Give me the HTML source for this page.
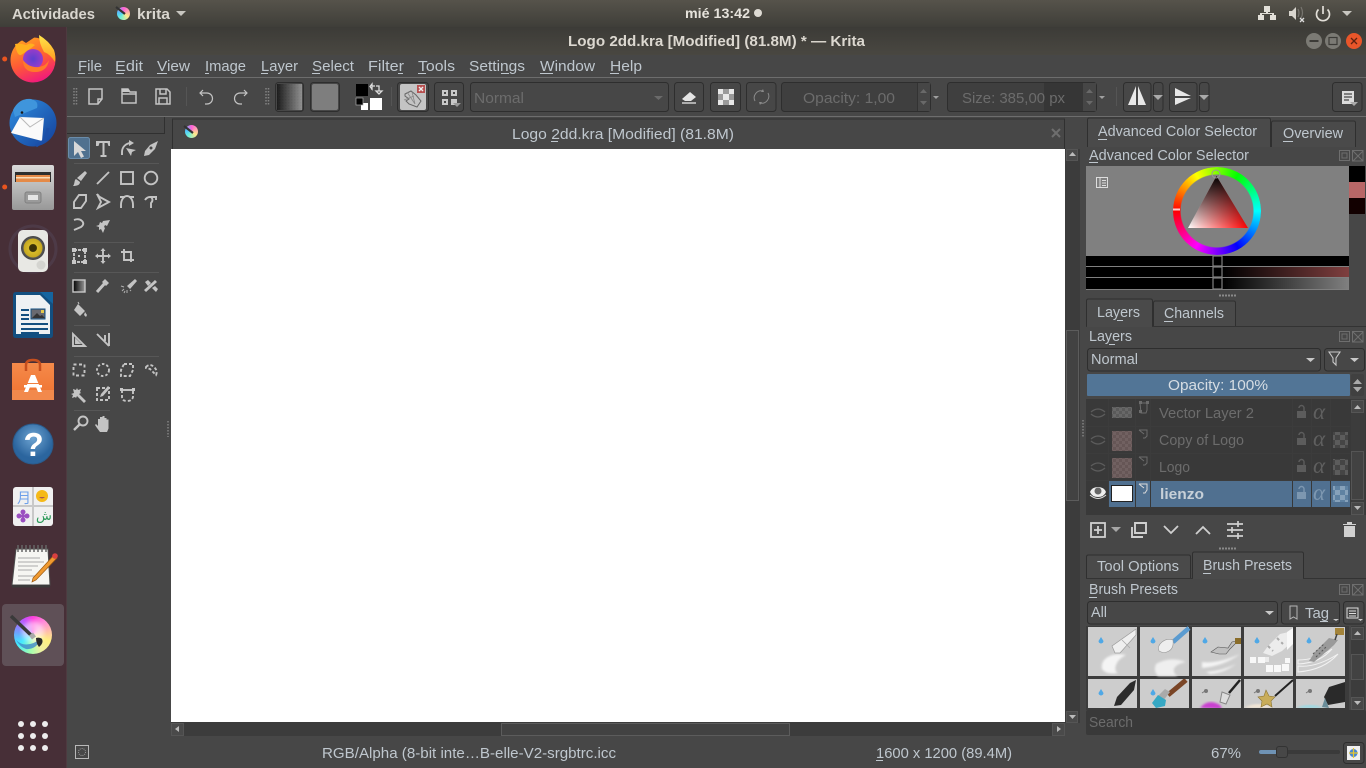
<!DOCTYPE html>
<html><head><meta charset="utf-8"><title>Krita</title>
<style>
html,body{margin:0;padding:0;width:1366px;height:768px;overflow:hidden;background:#474747}
svg{position:absolute;left:0;top:0;display:block}
text{font-family:"Liberation Sans",sans-serif;font-size:14.6px;fill:#bfc7ce}
.b{font-weight:bold}
.dim{fill:#6c6c6c}
.ic{fill:none;stroke:#c4c4c4;stroke-width:1.9}
.ic2{fill:#c4c4c4;stroke:none}
.sep{fill:#555}
.btn{fill:#474747;stroke:#2e2e2e;stroke-width:1}
.tab{fill:#4a4a4a;stroke:#2f2f2f}
.u{fill:#bfc7ce}
.hd{fill:none;stroke:#828282;stroke-width:1.5;stroke-dasharray:1.5 1.5}
</style></head><body>
<svg width="1366" height="768" viewBox="0 0 1366 768" xmlns="http://www.w3.org/2000/svg">
<defs>
<linearGradient id="top" x1="0" y1="0" x2="0" y2="1"><stop offset="0" stop-color="#56534b"/><stop offset="1" stop-color="#3f3e39"/></linearGradient>
<linearGradient id="tb" x1="0" y1="0" x2="0" y2="1"><stop offset="0" stop-color="#3c3b37"/><stop offset="1" stop-color="#494741"/></linearGradient>
<linearGradient id="g1" x1="0" y1="0" x2="1" y2="0"><stop offset="0" stop-color="#000"/><stop offset="1" stop-color="#999"/></linearGradient>
<linearGradient id="bar2" x1="0" y1="0" x2="1" y2="0"><stop offset="0" stop-color="#000"/><stop offset="1" stop-color="#7f3f3f"/></linearGradient>
<linearGradient id="bar3" x1="0" y1="0" x2="1" y2="0"><stop offset="0" stop-color="#000"/><stop offset="1" stop-color="#808080"/></linearGradient>
<linearGradient id="tw" gradientUnits="userSpaceOnUse" x1="1188" y1="228" x2="1248" y2="228"><stop offset="0" stop-color="#fff"/><stop offset="1" stop-color="#f00"/></linearGradient>
<linearGradient id="tk" gradientUnits="userSpaceOnUse" x1="1217" y1="176" x2="1217" y2="228"><stop offset="0" stop-color="#000"/><stop offset="1" stop-color="#000" stop-opacity="0"/></linearGradient>
<linearGradient id="ff" x1="0.2" y1="0" x2="0.6" y2="1"><stop offset="0" stop-color="#ffa41f"/><stop offset="0.55" stop-color="#ff5a36"/><stop offset="1" stop-color="#f0197d"/></linearGradient>
<linearGradient id="ffy" x1="0.5" y1="0" x2="0.5" y2="1"><stop offset="0" stop-color="#ffe64a"/><stop offset="1" stop-color="#ff9a1f"/></linearGradient>
<radialGradient id="ffp"><stop offset="0" stop-color="#5b3fd0"/><stop offset="1" stop-color="#9a3cc8"/></radialGradient>
<linearGradient id="tbg" x1="0" y1="0" x2="1" y2="1"><stop offset="0" stop-color="#2f8fe0"/><stop offset="1" stop-color="#143f9a"/></linearGradient>
<linearGradient id="cab" x1="0" y1="0" x2="0" y2="1"><stop offset="0" stop-color="#dadada"/><stop offset="1" stop-color="#989898"/></linearGradient>
<linearGradient id="org" x1="0" y1="0" x2="0" y2="1"><stop offset="0" stop-color="#f58a4a"/><stop offset="1" stop-color="#ef7130"/></linearGradient>
<radialGradient id="hlp" cx="0.5" cy="0.35"><stop offset="0" stop-color="#6ea4d2"/><stop offset="1" stop-color="#2b659e"/></radialGradient>
<radialGradient id="spk"><stop offset="0" stop-color="#3a3208"/><stop offset="0.3" stop-color="#3a3208"/><stop offset="0.36" stop-color="#d7bb2a"/><stop offset="0.76" stop-color="#c6a820"/><stop offset="0.82" stop-color="#555"/><stop offset="1" stop-color="#444"/></radialGradient>
<g id="fl"><rect x="0.500" y="0.500" width="10" height="10" fill="none" stroke="#6e6e6e" stroke-width="1"/><rect x="3" y="3" width="5" height="5" fill="none" stroke="#6e6e6e" stroke-width="1"/><path d="M13.500 0.500h10.500v10.500h-10.500zM14 1l10 10M24 1l-10 10" fill="none" stroke="#6e6e6e" stroke-width="1"/></g>
<g id="eyeoff"><path d="M-7 -1q7-6 14 0M-7 1q7 6 14 0" fill="none" stroke="#5c5c5c" stroke-width="1.300"/></g>
<g id="lock"><path d="M-5 -1h9v7h-9z" fill="#5c5c5c"/><path d="M2 -1v-3a2.500 2.500 0 0 0-5 0" fill="none" stroke="#5c5c5c" stroke-width="1.400"/></g>
<pattern id="chk" width="10" height="10" patternUnits="userSpaceOnUse"><rect width="10" height="10" fill="#5c5c5c"/><rect width="5" height="5" fill="#454545"/><rect x="5" y="5" width="5" height="5" fill="#454545"/></pattern>
<pattern id="chk2" width="10" height="10" patternUnits="userSpaceOnUse"><rect width="10" height="10" fill="#86a1ba"/><rect width="5" height="5" fill="#5f82a2"/><rect x="5" y="5" width="5" height="5" fill="#5f82a2"/></pattern>
<pattern id="chk3" width="6" height="6" patternUnits="userSpaceOnUse"><rect width="6" height="6" fill="#686868"/><rect width="3" height="3" fill="#5a5a5a"/><rect x="3" y="3" width="3" height="3" fill="#5a5a5a"/></pattern>
<pattern id="dit" width="3" height="3" patternUnits="userSpaceOnUse"><rect width="3" height="3" fill="#777"/><rect width="1.5" height="1.5" fill="#666"/></pattern>
<clipPath id="pr2"><rect x="1086" y="679" width="262" height="29"/></clipPath>
<filter id="bl"><feGaussianBlur stdDeviation="2.5"/></filter>
<filter id="bl1"><feGaussianBlur stdDeviation="1"/></filter>
</defs>

<!-- window base -->
<rect width="1366" height="768" fill="#474747"/>
<!-- top bar -->
<rect x="0" y="0" width="1366" height="27" fill="url(#top)"/>
<text x="12" y="19" class="b" textLength="83" lengthAdjust="spacingAndGlyphs" style="fill:#d9d6cf">Actividades</text>
<foreignObject x="117" y="7" width="13" height="13"><div xmlns="http://www.w3.org/1999/xhtml" style="width:13px;height:13px;border-radius:50%;background:conic-gradient(#ff5fd8,#ffe98a 35%,#70f0d8 60%,#4fc4ff 78%,#ff5fd8)"></div></foreignObject>
<path d="M116 7l9 7" stroke="#333" stroke-width="2.2"/>
<text x="137" y="19" class="b" textLength="33" lengthAdjust="spacingAndGlyphs" style="fill:#d9d6cf">krita</text>
<path d="M176 11h10l-5 5z" fill="#c8c6c0"/>
<text x="685" y="18" class="b" textLength="65" lengthAdjust="spacingAndGlyphs" style="fill:#e6e3dc;font-size:14px">mié 13:42</text>
<circle cx="758" cy="13" r="4" fill="#dedbd4"/>
<path d="M1264 6h6v6h-2v1h6v2h2v5h-6v-5h2v-1h-10v1h2v5h-6v-5h2v-2h6v-1h-2z" fill="#e2dfd8"/>
<path d="M1289 11h3l4-4v13l-4-4h-3z" fill="#d8d5ce"/><path d="M1298 9q2 4 0 8M1301 7q3 6 0 11" fill="none" stroke="#77756f" stroke-width="1.2"/><path d="M1300 18l4 4M1304 18l-4 4" stroke="#ddd" stroke-width="1.3"/>
<path d="M1318.500 9.500a6.500 6.500 0 1 0 9 0" fill="none" stroke="#e2dfd8" stroke-width="1.700"/><path d="M1323 6v8" stroke="#e2dfd8" stroke-width="1.7"/>
<path d="M1342 11h10l-5 5z" fill="#c8c6c0"/>

<!-- title bar -->
<rect x="67" y="27" width="1299" height="28" fill="url(#tb)"/>
<text x="568" y="46" class="b" textLength="297" lengthAdjust="spacingAndGlyphs" style="fill:#dcd8d0">Logo 2dd.kra [Modified]  (81.8M) * — Krita</text>
<circle cx="1314" cy="41" r="8" fill="#7b7a74"/><rect x="1309.5" y="40" width="9" height="2" fill="#3c3b37"/>
<circle cx="1333" cy="41" r="8" fill="#7b7a74"/><rect x="1329" y="37.5" width="8" height="7" fill="none" stroke="#3c3b37" stroke-width="1.2"/>
<circle cx="1354" cy="41" r="8" fill="#e9562a"/><path d="M1351 38l6 6M1357 38l-6 6" stroke="#5e2210" stroke-width="1.3"/>

<!-- menu bar -->
<rect x="67" y="55" width="1299" height="22" fill="#474747"/>
<g>
<text x="78" y="71" textLength="24" lengthAdjust="spacingAndGlyphs">File</text><rect class="u" x="78" y="73" width="7" height="1"/>
<text x="115" y="71" textLength="28" lengthAdjust="spacingAndGlyphs">Edit</text><rect class="u" x="116" y="73" width="8" height="1"/>
<text x="157" y="71" textLength="33" lengthAdjust="spacingAndGlyphs">View</text><rect class="u" x="157" y="73" width="10" height="1"/>
<text x="205" y="71" textLength="41" lengthAdjust="spacingAndGlyphs">Image</text><rect class="u" x="205" y="73" width="4" height="1"/>
<text x="261" y="71" textLength="37" lengthAdjust="spacingAndGlyphs">Layer</text><rect class="u" x="261" y="73" width="7" height="1"/>
<text x="312" y="71" textLength="42" lengthAdjust="spacingAndGlyphs">Select</text><rect class="u" x="312" y="73" width="8" height="1"/>
<text x="368" y="71" textLength="36" lengthAdjust="spacingAndGlyphs">Filter</text><rect class="u" x="398" y="73" width="5" height="1"/>
<text x="418" y="71" textLength="37" lengthAdjust="spacingAndGlyphs">Tools</text><rect class="u" x="418" y="73" width="8" height="1"/>
<text x="469" y="71" textLength="56" lengthAdjust="spacingAndGlyphs">Settings</text><rect class="u" x="501" y="73" width="8" height="1"/>
<text x="540" y="71" textLength="55" lengthAdjust="spacingAndGlyphs">Window</text><rect class="u" x="540" y="73" width="13" height="1"/>
<text x="610" y="71" textLength="32" lengthAdjust="spacingAndGlyphs">Help</text><rect class="u" x="610" y="73" width="9" height="1"/>
</g>
<rect x="67" y="77" width="1299" height="1" fill="#6d6d6d"/>

<!-- toolbar -->
<path class="hd" d="M74 88v17M76.500 88v17"/>
<path class="ic" style="stroke-width:1.500" d="M89 89h13v10l-4 5h-9zM102 99h-4v5"/>
<path class="ic" style="stroke-width:1.500" d="M122 94h14v9h-14zM122 94v-5h6l2 3h6v2"/><path d="M122 89h6l2 3h-8z" fill="#c8c8c8"/>
<path class="ic" style="stroke-width:1.500" d="M156 89h11l3 3v12h-14zM160 89v5h6v-5M159 104v-6h8v6"/>
<rect x="186" y="87" width="1" height="19" class="sep"/>
<path class="ic" style="stroke-width:1.2" d="M203 91l-3 3 3 3M200 94h7a5.5 5.5 0 0 1 0 11h-2" transform="translate(0,-1)"/>
<path class="ic" style="stroke-width:1.2" d="M245 91l3 3-3 3M248 94h-7a5.5 5.5 0 0 0 0 11h2" transform="translate(-1,-1)"/>
<path class="hd" d="M266 88v17M268.500 88v17"/>
<rect x="275.500" y="82.500" width="28" height="29" rx="3" class="btn" fill="#3a3a3a"/>
<rect x="277" y="84" width="25" height="26" fill="url(#g1)"/><rect x="277" y="84" width="25" height="26" fill="url(#dit)" opacity=".25"/>
<rect x="310.500" y="82.500" width="29" height="29" rx="3" class="btn"/>
<rect x="312" y="84" width="26" height="26" rx="2" fill="#7e7e7e"/>
<rect x="356" y="84" width="12" height="12" fill="#000"/>
<path d="M372 90v-4h3M372 84l-2 2.500 2 2.500z M376 86h3v5M379 94l-3-3h6z" fill="none" stroke="#ddd" stroke-width="1.3"/>
<rect x="361" y="103" width="7" height="7" fill="#fff"/><rect x="356" y="98" width="7" height="7" fill="#000" stroke="#aaa" stroke-width=".7"/>
<rect x="370" y="98" width="12" height="12" fill="#fff"/>
<rect x="391" y="87" width="1" height="19" class="sep"/>
<rect x="397.500" y="82.500" width="31" height="29" rx="3" class="btn"/>
<rect x="400" y="84" width="26" height="26" rx="2" fill="#c4c4c4"/>
<path d="M405 94l6-3 5 4 5 6-4 6-8-3-3-3 3-2-4-3z" fill="none" stroke="#666" stroke-width="1"/><path d="M407 92l8 12M412 92l3 12M404 100l10-4" stroke="#888" stroke-width=".8"/>
<rect x="417" y="85" width="8" height="8" fill="#b85050"/><path d="M419 87l4 4M423 87l-4 4" stroke="#eee" stroke-width="1.4"/>
<rect x="434.500" y="82.500" width="29" height="29" rx="3" class="btn"/>
<g fill="#c8c8c8"><rect x="442" y="90" width="6" height="6"/><rect x="451" y="90" width="6" height="6"/><rect x="442" y="99" width="6" height="6"/><rect x="451" y="99" width="6" height="6"/></g>
<g fill="#474747"><rect x="444" y="92" width="2" height="2"/><rect x="453" y="92" width="2" height="2"/><rect x="444" y="101" width="2" height="2"/></g>
<path d="M453 103h8l-4 4z" fill="#999"/>
<rect x="470.500" y="82.500" width="198" height="29" rx="3" class="btn" fill="#434343"/>
<text x="474" y="103" class="dim" textLength="50" lengthAdjust="spacingAndGlyphs">Normal</text>
<path d="M654 96h9l-4.500 4z" fill="#6a6a6a"/>
<rect x="674.500" y="82.500" width="29" height="29" rx="3" class="btn"/>
<path d="M682 99l8-7 6 5-5 4h-6z" fill="#e4e4e4"/><path d="M682 103h14" stroke="#d0d0d0" stroke-width="1.5"/>
<rect x="710.500" y="82.500" width="30" height="29" rx="3" class="btn"/>
<g><g fill="#e8e8e8"><rect x="718" y="89" width="5" height="5"/><rect x="729" y="89" width="5" height="5"/><rect x="723" y="94" width="6" height="6"/><rect x="718" y="100" width="5" height="5"/><rect x="729" y="100" width="5" height="5"/></g><g fill="#9a9a9a"><rect x="723" y="89" width="6" height="5"/><rect x="718" y="94" width="5" height="6"/><rect x="729" y="94" width="5" height="6"/><rect x="723" y="100" width="6" height="5"/></g></g>
<rect x="746.500" y="82.500" width="29.500" height="29" rx="3" class="btn"/>
<path d="M755 101a7 7 0 0 1 8-10M768 93a7 7 0 0 1-8 10" fill="none" stroke="#8a8a8a" stroke-width="1"/><path d="M763 89l1 3-3 0zM760 105l-1-3 3 0z" fill="#8a8a8a"/>
<rect x="781.500" y="82.500" width="149" height="29" rx="3" fill="#3f3f3f" stroke="#2e2e2e"/>
<rect x="917" y="83" width="13" height="28" fill="#464646"/><rect x="917" y="83" width="1" height="28" fill="#333"/>
<path d="M920 93l3.500-4 3.500 4zM920 101h7l-3.500 4z" fill="#696969"/>
<text x="803" y="103" class="dim" textLength="92" lengthAdjust="spacingAndGlyphs">Opacity:  1,00</text>
<path d="M933 96h6l-3 3z" fill="#a0a0a0"/>
<rect x="947.500" y="82.500" width="149" height="29" rx="3" fill="#3f3f3f" stroke="#2e2e2e"/>
<rect x="1044" y="83" width="39" height="28" fill="#363636"/>
<rect x="1083" y="83" width="13" height="28" fill="#464646"/>
<path d="M1086 93l3.500-4 3.500 4zM1086 101h7l-3.500 4z" fill="#696969"/>
<text x="962" y="103" class="dim" textLength="103" lengthAdjust="spacingAndGlyphs">Size:  385,00 px</text>
<path d="M1099 96h6l-3 3z" fill="#a0a0a0"/>
<rect x="1116" y="87" width="1" height="19" class="sep"/>
<rect x="1123.500" y="82.500" width="27.500" height="29" rx="3" class="btn"/>
<path d="M1136 86v19h-8zM1138 86v19h8z" fill="#e8e8e8"/>
<rect x="1153.500" y="82.500" width="9.500" height="29" rx="3" class="btn"/><path d="M1153 95h10l-5 5z" fill="#aaa"/>
<rect x="1169.500" y="82.500" width="27.500" height="29" rx="3" class="btn"/>
<path d="M1175 88l16 8h-16zM1175 105l16-7h-16z" fill="#e8e8e8"/>
<rect x="1199.500" y="82.500" width="9.500" height="29" rx="3" class="btn"/><path d="M1199 95h10l-5 5z" fill="#aaa"/>
<rect x="1332.500" y="82.500" width="29.500" height="29" rx="3" class="btn"/>
<path d="M1342 91h12v13h-12z" fill="#dcdcdc"/><path d="M1344 94h8M1344 97h8M1344 100h5" stroke="#474747" stroke-width="1.2"/><path d="M1350 102h8l-4 4z" fill="#aaa"/>
<rect x="67" y="116" width="1299" height="1" fill="#6d6d6d"/>

<!-- toolbox top -->
<rect x="67" y="117" width="98" height="17" fill="#474747"/>
<path d="M67 133.500h97.500V117" fill="none" stroke="#303030"/>

<!-- doc tab -->
<rect x="172" y="118" width="892" height="31" fill="#474747"/>
<path d="M172.500 149V119h892v30" fill="none" stroke="#303030"/>
<foreignObject x="185" y="125" width="13" height="13"><div xmlns="http://www.w3.org/1999/xhtml" style="width:13px;height:13px;border-radius:50%;background:conic-gradient(#ff5fd8,#ffe98a 35%,#70f0d8 60%,#4fc4ff 78%,#ff5fd8)"></div></foreignObject>
<path d="M184 126l9 7" stroke="#333" stroke-width="2.2"/>
<text x="512" y="139" textLength="222" lengthAdjust="spacingAndGlyphs">Logo 2dd.kra [Modified]  (81.8M)</text>
<rect class="u" x="551" y="141" width="7" height="1"/>
<path d="M1052 129l8 8M1060 129l-8 8" stroke="#6e6e6e" stroke-width="2"/>

<!-- canvas -->
<rect x="171" y="149" width="894" height="573" fill="#fff"/>
<!-- v scroll -->
<rect x="1065" y="149" width="15" height="574" fill="#3c3c3c"/>
<rect x="1066.500" y="149.500" width="11" height="11" fill="#4a4a4a" stroke="#555"/><path d="M1069 156l3.500-4 3.500 4z" fill="#bbb"/>
<rect x="1066.500" y="330.500" width="12" height="170" fill="#424242" stroke="#5c5c5c"/>
<rect x="1066.500" y="711.500" width="11" height="11" fill="#4a4a4a" stroke="#555"/><path d="M1069 715l3.500 4 3.500-4z" fill="#bbb"/>
<!-- h scroll -->
<rect x="171" y="722" width="894" height="14" fill="#3c3c3c"/>
<rect x="171.500" y="723.500" width="12" height="12" fill="#4a4a4a" stroke="#555"/><path d="M179 726v6l-4-3z" fill="#bbb"/>
<rect x="501.500" y="723.500" width="288" height="12" fill="#424242" stroke="#5c5c5c"/>
<rect x="1052.500" y="723.500" width="12" height="12" fill="#4a4a4a" stroke="#555"/><path d="M1057 726v6l4-3z" fill="#bbb"/>
<path class="hd" d="M168 421v16M1083 420v17"/>

<!-- toolbox -->
<rect x="68.500" y="137.500" width="21" height="21" rx="2" fill="#50718f" stroke="#6a8caa"/>
<path d="M74 141v15l4-4 3 6 3-1.500-3-5.500h5z" fill="#d8d8d8"/>
<path class="ic2" d="M96 141h14v5h-1.500l-1-3h-3v12h2v2h-6v-2h2v-12h-3l-1 3H96z"/>
<path class="ic" d="M122 155v-3a9 9 0 0 1 9-9"/><path class="ic2" d="M129 140l5 3-5 3zM126 148l10 2-4 2-1 4z"/>
<path class="ic2" d="M158 141l-3 8-6 6-5 1 1-5 5-6z"/><circle cx="151" cy="148" r="1.500" fill="#474747"/>
<rect x="74" y="163" width="85" height="1" fill="#575757"/>
<path class="ic2" d="M85 171l2 2-6 8-4-3zM76 179l4 3c0 3-3 4-7 4 2-2 1-6 3-7z"/>
<path class="ic" d="M97 184l12-12"/>
<rect x="121" y="172" width="12" height="12" class="ic"/>
<circle cx="151" cy="178" r="6.300" class="ic"/>
<path class="ic" d="M79 195h7v6l-5 7h-7v-6z"/>
<path class="ic" d="M98 196l11 6-11 6 3-6-3-6z"/><path class="ic" d="M97 194l2 2"/>
<path class="ic" d="M121 208v-3a6 9 0 0 1 12 0v3M120 197l5 0M129 197h5"/>
<path class="ic" d="M145 200q2-3 5-3h7M151 197q3 3 0 6v5M156 197v3"/>
<path class="ic" d="M74 220q5-2 8 1t-1 6l-7 3"/>
<path class="ic2" d="M110 220l-3 6-2-1-1 2 1 1-2 5-2-4-2 1 0-3-3-1 3-1 1-3 2 1 1-2z"/>
<rect x="74" y="242" width="60" height="1" fill="#575757"/>
<rect x="74" y="250" width="11" height="12" class="ic" style="stroke-dasharray:3 1"/><g fill="#c8c8c8"><rect x="72" y="248" width="4" height="4"/><rect x="83" y="248" width="4" height="4"/><rect x="72" y="260" width="4" height="4"/><rect x="83" y="260" width="4" height="4"/><rect x="78" y="255" width="2" height="2"/></g>
<path class="ic" d="M103 250v12M97 256h12"/><path class="ic2" d="M103 248l2.500 3h-5zM103 264l2.500-3h-5zM95 256l3-2.500v5zM111 256l-3-2.500v5z"/>
<path class="ic" d="M124 249v11h10M121 252h10v10"/>
<rect x="74" y="272" width="85" height="1" fill="#575757"/>
<rect x="73" y="280" width="12" height="12" fill="url(#g1)" stroke="#c8c8c8" stroke-width="1.4"/>
<path d="M105 283l-8 9" stroke="#c4c4c4" stroke-width="3"/><path class="ic2" d="M105 279l4 4-3 3-4-4z"/>
<path class="ic2" d="M135 279l2 2-7 8-3-3z"/><path d="M122 291l2-2M121 286l3 1M127 293v-3M131 291l-1-1M124 293l1-2" stroke="#b0b0b0" fill="none"/>
<path class="ic2" d="M145 282l3-2 3 3-3 3zM152 288l3-2 3 3-2 3zM155 280l2 2-11 10-2-2z"/>
<path class="ic2" d="M78 304l7 7-5 5-6-6zM85 312l2 3-1 2-2-2z"/><path class="ic" style="stroke-width:1" d="M79 304l-1-2"/>
<rect x="74" y="325" width="36" height="1" fill="#575757"/>
<path class="ic" d="M73 346v-12l12 12zM76 343h3l-3-3z"/>
<path class="ic" d="M109 346v-13M97 334l12 12M105 335v6"/>
<rect x="74" y="356" width="85" height="1" fill="#575757"/>
<rect x="73.500" y="364.500" width="11" height="11" class="ic" style="stroke-dasharray:3 2.500"/>
<circle cx="103" cy="370" r="6" class="ic" style="stroke-dasharray:2.500 2"/>
<path class="ic" style="stroke-dasharray:3 2" d="M124 364h9v6l-3 6h-9v-6z"/>
<path class="ic" style="stroke-dasharray:3 2" d="M146 367q4-4 8 0t2 8l-3-3-3-3-4-1z"/>
<path class="ic2" d="M73 389l3 1 1-2 1 2 3-1-1 3 1 1-2 1 7 7-2 2-7-7-1 2-1-1-3 1 1-3-2-1 3-1z"/>
<rect x="97" y="388" width="12" height="12" class="ic" style="stroke-dasharray:3 2"/><path class="ic2" d="M108 386l2 2-7 8-3 1 1-3z"/>
<path class="ic" style="stroke-dasharray:3 2" d="M122 390v7q0 4 5 4t6-4v-7"/><path class="ic" d="M122 390h11"/><rect x="120" y="388" width="3" height="3" fill="#c8c8c8"/><rect x="132" y="388" width="3" height="3" fill="#c8c8c8"/>
<rect x="74" y="410" width="36" height="1" fill="#575757"/>
<circle cx="83" cy="421" r="4.500" class="ic"/><path class="ic" d="M79.500 424.500l-5.500 5.500" style="stroke-width:2.400"/>
<path class="ic2" d="M96 424l2 2v-7h2v-2h2.500v-1h2v2h2v1.500h2v9l-1.500 3.500h-7l-3-4-2-3z"/>

<!-- right panel tabs -->
<path class="tab" d="M1087.500 147V120q0-2 2-2h179q2 0 2 2v27"/>
<path class="tab" d="M1271.500 147V123q0-2 2-2h80q2 0 2 2v24" fill="#444"/>
<text x="1098" y="136" textLength="159" lengthAdjust="spacingAndGlyphs">Advanced Color Selector</text><rect class="u" x="1098" y="139" width="9" height="1"/>
<text x="1283" y="138" textLength="60" lengthAdjust="spacingAndGlyphs">Overview</text><rect class="u" x="1283" y="141" width="10" height="1"/>
<text x="1089" y="160" textLength="160" lengthAdjust="spacingAndGlyphs">Advanced Color Selector</text><rect class="u" x="1089" y="162" width="9" height="1"/>
<use href="#fl" x="1339" y="150"/>

<!-- color selector -->
<rect x="1086" y="166" width="263" height="124" fill="#808080"/>
<rect x="1349" y="166" width="16" height="16" fill="#000"/><rect x="1349" y="182" width="16" height="16" fill="#b86666"/><rect x="1349" y="198" width="16" height="16" fill="#120000"/>
<rect x="1096.500" y="177.500" width="11" height="10" fill="none" stroke="#ddd"/><path d="M1100 178v9M1102 180.500h4M1102 183h4M1102 185.500h4" stroke="#ddd" stroke-width="1"/>
<foreignObject x="1173" y="167" width="88" height="88"><div xmlns="http://www.w3.org/1999/xhtml" style="width:88px;height:88px;border-radius:50%;background:conic-gradient(from 270deg,#f00,#ff0,#0f0,#0ff,#00f,#f0f,#f00);-webkit-mask:radial-gradient(circle,transparent 36px,#000 37px);mask:radial-gradient(circle,transparent 36px,#000 37px)"></div></foreignObject>
<path d="M1173 209.500h7" stroke="#ffcccc" stroke-width="2"/>
<path d="M1216.500 176L1188 228h60z" fill="url(#tw)"/><path d="M1216.500 176L1188 228h60z" fill="url(#tk)"/>
<circle cx="1216" cy="174" r="4" fill="none" stroke="#999" stroke-width="1"/>
<rect x="1086" y="256" width="263" height="10" fill="#000"/>
<rect x="1086" y="267" width="263" height="10" fill="#000"/><rect x="1223" y="267" width="126" height="10" fill="url(#bar2)"/>
<rect x="1086" y="278" width="263" height="11" fill="#000"/><rect x="1223" y="278" width="126" height="11" fill="url(#bar3)"/>
<g fill="none" stroke="#808080" stroke-width="1.2"><rect x="1213" y="256" width="9" height="10"/><rect x="1213" y="267" width="9" height="10"/><rect x="1213" y="278" width="9" height="11"/></g>
<path d="M1219 295.500h17" stroke="#8a8a8a" stroke-width="2" stroke-dasharray="2 1"/>

<!-- layers tabs -->
<rect x="1086" y="326" width="280" height="1" fill="#333"/>
<path class="tab" d="M1086.500 326V301q0-2 2-2h62q2 0 2 2v25"/>
<path class="tab" d="M1153.500 326V303q0-2 2-2h78q2 0 2 2v23" fill="#444"/>
<rect x="1087" y="325" width="65" height="2" fill="#4a4a4a"/>
<text x="1097" y="317" textLength="43" lengthAdjust="spacingAndGlyphs">Layers</text><rect class="u" x="1117" y="320" width="6" height="1"/>
<text x="1164" y="318" textLength="60" lengthAdjust="spacingAndGlyphs">Channels</text><rect class="u" x="1164" y="321" width="9" height="1"/>
<text x="1089" y="341" textLength="43" lengthAdjust="spacingAndGlyphs">Layers</text><rect class="u" x="1109" y="344" width="6" height="1"/>
<use href="#fl" x="1339" y="331"/>
<rect x="1087.500" y="348.500" width="233" height="22.500" rx="3" class="btn"/>
<text x="1091" y="364" textLength="47" lengthAdjust="spacingAndGlyphs">Normal</text>
<path d="M1306 358h9l-4.500 4z" fill="#c8c8c8"/>
<rect x="1324.500" y="348.500" width="40" height="22.500" rx="3" class="btn"/>
<path d="M1329 352h11l-4 6v7l-3-3v-4z" fill="none" stroke="#c8c8c8" stroke-width="1.1"/>
<path d="M1350 358h9l-4.500 4z" fill="#c8c8c8"/>
<rect x="1087" y="374" width="263" height="22" rx="1" fill="#527596"/>
<text x="1168" y="390" textLength="100" lengthAdjust="spacingAndGlyphs" style="fill:#d6dde3">Opacity:  100%</text>
<rect x="1351" y="374" width="13" height="22" rx="2" fill="#404040"/><path d="M1353 384l4.500-5 4.500 5zM1353 387h9l-4.500 5z" fill="#aaa"/>

<!-- layers list -->
<rect x="1086" y="399" width="280" height="116" fill="#393939"/>
<g fill="#3c3c3c"><rect x="1086" y="426" width="264" height="1"/><rect x="1086" y="453" width="264" height="1"/><rect x="1086" y="480" width="264" height="1"/></g>
<g fill="#3c3c3c"><rect x="1108" y="399" width="1" height="108"/><rect x="1135" y="399" width="1" height="108"/><rect x="1150" y="399" width="1" height="108"/><rect x="1292" y="399" width="1" height="108"/><rect x="1311" y="399" width="1" height="108"/><rect x="1330" y="399" width="1" height="108"/></g>
<use href="#eyeoff" x="1098" y="413"/><use href="#eyeoff" x="1098" y="440"/><use href="#eyeoff" x="1098" y="467"/>
<rect x="1112" y="407" width="20" height="11" fill="url(#chk3)"/>
<rect x="1112" y="431" width="20" height="20" fill="url(#chk3)"/><rect x="1112" y="431" width="20" height="20" fill="#8a4a4a" opacity=".25"/>
<rect x="1112" y="458" width="20" height="20" fill="url(#chk3)"/><rect x="1112" y="458" width="20" height="20" fill="#8a4a4a" opacity=".25"/>
<path d="M1140 403h7v7l-1 3h-5z" fill="none" stroke="#6c6c6c" stroke-width="1"/><g fill="#6c6c6c"><rect x="1139" y="401" width="3" height="3"/><rect x="1146" y="401" width="3" height="3"/><rect x="1139" y="410" width="3" height="3"/></g>
<path d="M1139 430h8v6l-2 2h-2" fill="none" stroke="#6c6c6c" stroke-width="1"/><path d="M1139 430l5 4" stroke="#6c6c6c"/>
<path d="M1139 457h8v6l-2 2h-2" fill="none" stroke="#6c6c6c" stroke-width="1"/><path d="M1139 457l5 4" stroke="#6c6c6c"/>
<g><text x="1159" y="418" class="dim" textLength="95" lengthAdjust="spacingAndGlyphs">Vector Layer 2</text>
<text x="1159" y="445" class="dim" textLength="85" lengthAdjust="spacingAndGlyphs">Copy of Logo</text>
<text x="1159" y="472" class="dim" textLength="31" lengthAdjust="spacingAndGlyphs">Logo</text></g>
<use href="#lock" x="1302" y="412"/><use href="#lock" x="1302" y="439"/><use href="#lock" x="1302" y="466"/>
<text x="1313" y="419" style="fill:#5f5f5f;font-size:23px;font-style:italic;font-family:'Liberation Serif',serif">α</text><text x="1313" y="446" style="fill:#5f5f5f;font-size:23px;font-style:italic;font-family:'Liberation Serif',serif">α</text><text x="1313" y="473" style="fill:#5f5f5f;font-size:23px;font-style:italic;font-family:'Liberation Serif',serif">α</text>
<rect x="1333" y="432" width="15" height="16" fill="url(#chk)"/><rect x="1333" y="459" width="15" height="16" fill="url(#chk)"/>
<!-- selected row -->
<rect x="1109" y="481" width="241" height="26" fill="#507090"/>
<g fill="#383838"><rect x="1135" y="481" width="1" height="26"/><rect x="1150" y="481" width="1" height="26"/><rect x="1292" y="481" width="1" height="26"/><rect x="1311" y="481" width="1" height="26"/><rect x="1330" y="481" width="1" height="26"/></g>
<rect x="1111.500" y="485.500" width="21" height="16" fill="#fff" stroke="#222"/>
<path d="M1098 487q6 0 8 5-2 5-8 5t-8-5q2-5 8-5z" fill="#eee"/><circle cx="1098" cy="491" r="3.500" fill="#666"/><path d="M1090 495q8 7 16 0" fill="none" stroke="#ddd"/>
<path d="M1139 484h8v6l-2 3h-2" fill="none" stroke="#dadada" stroke-width="1"/><path d="M1139 484l5 4" stroke="#dadada"/>
<text x="1160" y="499" class="b" textLength="44" lengthAdjust="spacingAndGlyphs" style="fill:#c7d0d8">lienzo</text>
<g transform="translate(1302,493)"><path d="M-5 -1h9v7h-9z" fill="#7d97b0"/><path d="M2 -1v-3a2.500 2.500 0 0 0-5 0" fill="none" stroke="#7d97b0" stroke-width="1.400"/></g>
<text x="1313" y="500" style="fill:#7d97b0;font-size:23px;font-style:italic;font-family:'Liberation Serif',serif">α</text>
<rect x="1333" y="486" width="15" height="16" fill="url(#chk2)"/>
<rect x="1351" y="399" width="14" height="116" fill="#3c3c3c"/>
<rect x="1351.500" y="400.500" width="12" height="12" fill="#474747" stroke="#555"/><path d="M1354 409l3.500-4 3.500 4z" fill="#bbb"/>
<rect x="1351.500" y="451.500" width="12" height="48" fill="#424242" stroke="#555"/>
<rect x="1351.500" y="502.500" width="12" height="12" fill="#474747" stroke="#555"/><path d="M1354 506l3.500 4 3.500-4z" fill="#bbb"/>

<!-- layer buttons -->
<rect x="1091" y="523" width="14" height="14" fill="none" stroke="#d0d0d0" stroke-width="1.8"/><path d="M1098 526v8M1094 530h8" stroke="#d0d0d0" stroke-width="1.8"/>
<path d="M1111 527h10l-5 5z" fill="#a6a6a6"/>
<path class="ic" style="stroke:#d0d0d0" d="M1135 523h11v10h-11z M1132 527v10h11"/>
<path class="ic" style="stroke:#d0d0d0;stroke-width:1.8" d="M1164 526l7 7 7-7"/>
<path class="ic" style="stroke:#d0d0d0;stroke-width:1.8" d="M1196 534l7-7 7 7"/>
<path d="M1227 524h16M1227 530h16M1227 536h16" stroke="#d0d0d0" stroke-width="1.7"/><path d="M1238 521v6M1232 527v6M1238 533v6" stroke="#d0d0d0" stroke-width="1.7"/>
<path d="M1343 524h13v1h-13zM1347 522h5v2h-5zM1344 526h11v11h-11z" fill="#d0d0d0"/>
<path d="M1219 548.500h17" stroke="#8a8a8a" stroke-width="2" stroke-dasharray="2 1"/>

<!-- brush presets tabs -->
<rect x="1086" y="578" width="280" height="1" fill="#333"/>
<path class="tab" d="M1086.500 578V557q0-2 2-2h100q2 0 2 2v21" fill="#444"/>
<path class="tab" d="M1192.500 578V554q0-2 2-2h107q2 0 2 2v24"/>
<rect x="1193" y="577" width="110" height="2" fill="#4a4a4a"/>
<text x="1097" y="571" textLength="82" lengthAdjust="spacingAndGlyphs">Tool Options</text>
<text x="1203" y="570" textLength="89" lengthAdjust="spacingAndGlyphs">Brush Presets</text><rect class="u" x="1203" y="573" width="8" height="1"/>
<text x="1089" y="594" textLength="89" lengthAdjust="spacingAndGlyphs">Brush Presets</text><rect class="u" x="1089" y="597" width="8" height="1"/>
<use href="#fl" x="1339" y="584"/>
<rect x="1087.500" y="601.500" width="190" height="22.500" rx="3" class="btn"/>
<text x="1091" y="617" textLength="16" lengthAdjust="spacingAndGlyphs">All</text>
<path d="M1265 611h9l-4.500 4z" fill="#c8c8c8"/>
<rect x="1281.500" y="601.500" width="58" height="22.500" rx="3" class="btn"/>
<path d="M1290 606h7v13l-3.500-2-3.500 2z" fill="none" stroke="#b4b4b4" stroke-width="1"/>
<text x="1305" y="618" textLength="24" lengthAdjust="spacingAndGlyphs">Tag</text><rect class="u" x="1320" y="621" width="8" height="1"/>
<path d="M1333 619h6l-3 2z" fill="#c8c8c8"/>
<rect x="1343.500" y="601.500" width="20.500" height="22.500" rx="3" class="btn"/>
<path d="M1347 608h11v10h-11z" fill="none" stroke="#ddd"/><path d="M1349 611h7M1349 613.500h7M1349 616h7" stroke="#ddd"/><path d="M1358 619h5l-2.500 2z" fill="#ccc"/>

<!-- preset grid -->
<rect x="1086" y="626" width="263" height="84" fill="#3c3c3c"/>
<g fill="#cdcdcd"><rect x="1088" y="627" width="49" height="49"/><rect x="1140" y="627" width="49" height="49"/><rect x="1192" y="627" width="49" height="49"/><rect x="1244" y="627" width="49" height="49"/><rect x="1296" y="627" width="49" height="49"/></g>
<g clip-path="url(#pr2)"><g fill="#cdcdcd"><rect x="1088" y="679" width="49" height="49"/><rect x="1140" y="679" width="49" height="49"/><rect x="1192" y="679" width="49" height="49"/><rect x="1244" y="679" width="49" height="49"/><rect x="1296" y="679" width="49" height="49"/></g>
<path d="M1096 710q8-4 16 0z" fill="#eee" filter="url(#bl1)"/>
<path d="M1136 680l-6 3-13 14-3 9 7-1 13-15z" fill="#2c2c2c"/>
<path d="M1186 680l-18 15" stroke="#7a4526" stroke-width="5"/><path d="M1170 692l-5-3-7 7 5 5z" fill="#aaa"/><path d="M1158 695l-6 8 4 5 9-2 1-6z" fill="#36a8c4"/>
<path d="M1200 708q8-10 20-3l2 4z" fill="#c93fd0" filter="url(#bl1)"/><path d="M1240 680l-11 13" stroke="#222" stroke-width="2.500"/><path d="M1222 692l8 3-4 9-6-2z" fill="#ddd" stroke="#888"/>
<path d="M1244 708q14-8 30 0z" fill="#f3e6d5" filter="url(#bl1)"/><path d="M1293 680l-18 16" stroke="#222" stroke-width="2"/><path d="M1266 690l3 6 6 1-4 4 1 6-5-3-6 3 1-6-4-4 6-1z" fill="#c9ad5a" stroke="#8b7330" stroke-width=".6"/>
<path d="M1296 708q14-6 28 0z" fill="#98dbe6" filter="url(#bl1)"/><path d="M1345 682l-16 5-5 10 4 8 17-3z" fill="#2a2a2a"/><path d="M1325 698l-3 9 7 1z" fill="#6a8d99"/>
<g fill="#777"><circle cx="1206" cy="691" r="2"/><circle cx="1258" cy="691" r="2"/><circle cx="1310" cy="691" r="2"/></g>
<path d="M1202 693l3-2M1254 693l3-2M1306 693l3-2" stroke="#777"/>
<g fill="#4fa8e6"><path d="M1101 689l-2.500 4a2.500 2.500 0 0 0 5 0zM1153 689l-2.500 4a2.500 2.500 0 0 0 5 0z"/></g>
</g>
<!-- row 1 art -->
<path d="M1104 660q8-8 22-5-8 4-10 10t2 8q-12 2-16-4-1-5 2-9z" fill="#f4f4f4" filter="url(#bl1)"/>
<path d="M1136 629l-24 17 3 7 5 0 16-18z" fill="#efefef" stroke="#9c9c9c" stroke-width=".7"/><path d="M1122 640l8 8" stroke="#aaa" stroke-width=".8"/>
<path d="M1156 664q14-8 30-2-10 2-12 7-1 5 4 7h-20q-5-5-2-12z" fill="#efefef" filter="url(#bl1)"/>
<path d="M1189 628l-16 14" stroke="#5a9bd0" stroke-width="4.500"/><path d="M1173 640q-6-2-11 2t-3 9q5 3 10 0t4-11z" fill="#eee" stroke="#999" stroke-width=".6"/>
<path d="M1202 662q16 2 38-8-16 12-38 14zM1206 672q16-1 30-8-12 9-26 10z" fill="#f4f4f4" filter="url(#bl1)"/>
<path d="M1240 640l-8 2-4 6-10-1-7 5 8 2h7l4-5 6-6z" fill="#c0c0c0" stroke="#555" stroke-width=".6"/><rect x="1235" y="638" width="6" height="6" fill="#8a6d2a"/>
<g fill="#f8f8f8"><rect x="1258" y="657" width="7" height="6"/><rect x="1266" y="665" width="7" height="7"/><rect x="1274" y="665" width="7" height="7"/><rect x="1282" y="664" width="7" height="7"/><rect x="1250" y="657" width="6" height="6" /><rect x="1285" y="658" width="5" height="5"/><rect x="1264" y="657" width="5" height="5" opacity=".7"/></g>
<path d="M1293 631l-13 3-12 12-5 7 9 3 10-5 11-10z" fill="#ececec"/><path d="M1268 646l5 5M1277 638l6 6" stroke="#aaa" stroke-width="2" stroke-dasharray="3 3"/><path d="M1293 628v16l-6 6v-18z" fill="#f8f8f8"/>
<path d="M1298 666q18 2 40-12-14 16-40 18zM1298 660q18 0 34-11-12 14-34 15z" fill="none" stroke="#f2f2f2" stroke-width="1"/>
<path d="M1338 640l-9-2-14 14-6 9 5 1 12-10 8-7z" fill="#9a9a9a"/><path d="M1313 654l11-10M1316 657l10-10" stroke="#555" stroke-dasharray="2 2"/><rect x="1335" y="628" width="9" height="7" fill="#a4843a"/><path d="M1337 634l-2 6" stroke="#444" stroke-width="1.5"/>
<g fill="#4fa8e6"><path d="M1101 637l-2.500 4a2.500 2.500 0 0 0 5 0z"/><path d="M1153 637l-2.500 4a2.500 2.500 0 0 0 5 0z"/><path d="M1205 637l-2.500 4a2.500 2.500 0 0 0 5 0z"/><path d="M1257 637l-2.500 4a2.500 2.500 0 0 0 5 0z"/><path d="M1309 637l-2.500 4a2.500 2.500 0 0 0 5 0z"/></g>
<rect x="1351" y="626" width="14" height="84" fill="#3c3c3c"/>
<rect x="1351.500" y="627.500" width="12" height="12" fill="#474747" stroke="#555"/><path d="M1354 635l3.500-4 3.500 4z" fill="#bbb"/>
<rect x="1351.500" y="654.500" width="12" height="25" fill="#424242" stroke="#555"/>
<rect x="1351.500" y="697.500" width="12" height="12" fill="#474747" stroke="#555"/><path d="M1354 701l3.500 4 3.500-4z" fill="#bbb"/>
<rect x="1086" y="710" width="280" height="25" rx="2" fill="#393939"/>
<text x="1089" y="727" class="dim" textLength="44" lengthAdjust="spacingAndGlyphs">Search</text>

<!-- status bar -->
<rect x="75.500" y="745.500" width="13" height="13" fill="none" stroke="#b8b8b8"/><circle cx="82" cy="752" r="3.500" fill="none" stroke="#999" stroke-dasharray="1 1"/>
<text x="322" y="758" textLength="294" lengthAdjust="spacingAndGlyphs">RGB/Alpha (8-bit inte…B-elle-V2-srgbtrc.icc</text>
<text x="876" y="758" textLength="136" lengthAdjust="spacingAndGlyphs">1600 x 1200 (89.4M)</text><rect class="u" x="876" y="760" width="7" height="1"/>
<text x="1211" y="758" textLength="30" lengthAdjust="spacingAndGlyphs">67%</text>
<rect x="1259" y="750" width="81" height="4" rx="2" fill="#3a3a3a"/><rect x="1259" y="750" width="19" height="4" rx="2" fill="#6f93b5"/>
<rect x="1276.500" y="746.500" width="11" height="11" rx="2.500" fill="#474747" stroke="#333"/>
<rect x="1343.500" y="742.500" width="20.500" height="21" rx="3" class="btn"/>
<rect x="1347" y="746" width="13" height="14" fill="#f0f0f0"/><circle cx="1353.500" cy="753" r="4" fill="#4a86d0"/><path d="M1349 753h9M1353.500 748v10" stroke="#e8c830" stroke-width="1.200"/>

<!-- dock -->
<rect x="0" y="27" width="67" height="741" fill="#472f37"/>
<rect x="66" y="27" width="1" height="741" fill="#4e3a40"/>
<circle cx="4.700" cy="59" r="2.500" fill="#e9541f"/><circle cx="4.700" cy="187" r="2.500" fill="#e9541f"/><circle cx="4.700" cy="635" r="2.500" fill="#e9541f"/>
<!-- firefox -->
<circle cx="33" cy="60" r="22.500" fill="url(#ff)"/>
<path d="M14 35l12 8 12-8z" fill="#472f37"/>
<path d="M39 35q10 6 15 15 2 6 1 12-5-8-11-10-5-9-5-17z" fill="url(#ffy)"/>
<path d="M15 44q5-1 11 1 5-3 9 0-6 5-14 10-4 1-6-11z" fill="#ffb01f"/>
<circle cx="33" cy="59" r="10" fill="url(#ffp)"/>
<path d="M23 60q0 12 12 12t14-12q-3 6-10 7-10 1-16-7z" fill="#ff7a2a"/>
<!-- thunderbird -->
<circle cx="33" cy="123" r="23.500" fill="url(#tbg)"/>
<path d="M13 110q6-12 18-11 8 2 6 9l-22 9z" fill="#3f95dc"/><circle cx="22" cy="112.500" r="1.300" fill="#1a1a1a"/>
<path d="M11 133l9-16 24 1-2 23-31-8z" fill="#fafafa"/>
<path d="M20 117l10 10 14-9" fill="none" stroke="#b8b8b8" stroke-width="1"/>
<path d="M36 146l9-6 3-12" fill="none" stroke="#1b4fa8" stroke-width="3"/>
<!-- files -->
<rect x="12" y="165" width="42" height="45" rx="2" fill="url(#cab)"/>
<rect x="15" y="172" width="36" height="10" fill="#2e2e2e"/><rect x="16" y="175" width="34" height="7" fill="#e58a48"/><rect x="16" y="177" width="34" height="1.500" fill="#f9dcb8"/>
<rect x="25" y="192" width="16" height="11" rx="2" fill="#9a9a9a" stroke="#808080"/><rect x="28" y="195" width="10" height="5" fill="#e4e4e4"/>
<!-- rhythmbox -->
<circle cx="33" cy="249" r="23" fill="none" stroke="#5a5168" stroke-width="3" opacity=".35"/>
<rect x="18" y="230" width="30" height="42" rx="5" fill="#e8e8e4"/>
<circle cx="33" cy="248" r="12" fill="url(#spk)"/>
<circle cx="41" cy="265" r="4.500" fill="#d4d4d0"/>
<!-- writer -->
<path d="M13 295q0-3 3-3h25l12 12v31q0 3-3 3H16q-3 0-3-3z" fill="#134f80"/>
<path d="M16 295h24l10 10v29H16z" fill="#eef1f3"/><path d="M40 292h13v12z" fill="#1565a0"/>
<g fill="#134f80"><rect x="21" y="309" width="8" height="2"/><rect x="21" y="314" width="8" height="2"/><rect x="21" y="318" width="8" height="2"/><rect x="21" y="323" width="27" height="2"/><rect x="21" y="328" width="27" height="2"/><rect x="21" y="332" width="18" height="2"/></g>
<rect x="31" y="309" width="14" height="10" fill="#6a6a70" stroke="#134f80"/><path d="M32 318l5-5 3 3 2-1 3 3z" fill="#333"/><rect x="41" y="310" width="3" height="3" fill="#e6c84a"/>
<!-- software -->
<rect x="12" y="363" width="42" height="37" fill="url(#org)"/><rect x="12" y="390" width="42" height="10" fill="#f2894c"/>
<path d="M26 371v-6q0-5 7-5t7 5v6" fill="none" stroke="#c64f1e" stroke-width="2.500"/>
<path d="M24 392l7-17h4l7 17h-4l-2-5h-6l-2 5z" fill="#fff"/><rect x="24" y="385" width="18" height="2.500" fill="#fff"/><rect x="24" y="383" width="18" height="1" fill="#f08040"/>
<!-- help -->
<circle cx="33" cy="444" r="20" fill="url(#hlp)" stroke="#2a5b8c"/>
<text x="23.500" y="456" style="fill:#fff;font-size:33px;font-weight:bold;font-family:'Liberation Sans',sans-serif">?</text>
<!-- mozc -->
<rect x="13" y="487" width="40" height="39" rx="3" fill="#f0f0f0"/><path d="M33 487v39M13 506h40" stroke="#c8c8c8" stroke-width="2"/>
<text x="17" y="503" style="fill:#6ea0ea;font-size:14px;font-family:'Noto Sans CJK SC',sans-serif">月</text>
<circle cx="42" cy="496" r="6" fill="#f5b918"/><path d="M39 497q3 3 6 0z" fill="#a55"/>
<g fill="#9a4fc0"><circle cx="23" cy="512" r="2.500"/><circle cx="23" cy="520" r="2.500"/><circle cx="19" cy="516" r="2.500"/><circle cx="27" cy="516" r="2.500"/><circle cx="23" cy="516" r="2"/></g>
<text x="36" y="520" style="fill:#2e9a5a;font-size:13px;font-family:'DejaVu Sans',sans-serif">ش</text>
<!-- gedit -->
<path d="M16 549h32l2 36H12z" fill="#f6f6f2" stroke="#4c4c4c"/><rect x="12" y="585" width="38" height="2.500" fill="#3a3a3a"/>
<path d="M18 545v7M22 545v7M26 545v7M30 545v7M34 545v7M38 545v7M42 545v7M46 545v7" stroke="#666" stroke-width="1.5"/>
<path d="M18 558h22M18 562h26M18 566h20M18 570h14M18 576h18M18 580h12" stroke="#aaa" stroke-width="1"/>
<path d="M33 578l21-23 3 3-21 22-4 2z" fill="#f09a30" stroke="#9c5a10" stroke-width=".7"/><circle cx="55" cy="556" r="2.800" fill="#d84040"/>
<!-- krita active -->
<rect x="2" y="604" width="62" height="62" rx="4" fill="#5f5057"/>
<foreignObject x="14" y="616" width="38" height="38"><div xmlns="http://www.w3.org/1999/xhtml" style="width:38px;height:38px;border-radius:50%;background:conic-gradient(#ff40dc 0deg,#ff8ad8 40deg,#fff080 110deg,#f0f0a0 150deg,#a0ffb0 190deg,#40e8ff 240deg,#70a0ff 280deg,#c050ff 330deg,#ff40dc 360deg)"></div></foreignObject>
<circle cx="33" cy="632" r="11" fill="#ffffff" opacity=".55" filter="url(#bl)"/>
<path d="M16 640q10 10 26-2-6 12-16 11-6-2-10-9z" fill="#3f88cc" opacity=".8"/>
<path d="M11 616l22 21" stroke="#3a3a3a" stroke-width="3.500"/><path d="M31 634l3 4" stroke="#aaa" stroke-width="5"/><path d="M36 638q4-1 6 1 2 4-3 8-3-4-3-9z" fill="#2a2a2a"/>
<!-- grid -->
<g fill="#ededed"><circle cx="21" cy="724" r="3"/><circle cx="33" cy="724" r="3"/><circle cx="45" cy="724" r="3"/><circle cx="21" cy="736" r="3"/><circle cx="33" cy="736" r="3"/><circle cx="45" cy="736" r="3"/><circle cx="21" cy="748" r="3"/><circle cx="33" cy="748" r="3"/><circle cx="45" cy="748" r="3"/></g>
</svg>
</body></html>
